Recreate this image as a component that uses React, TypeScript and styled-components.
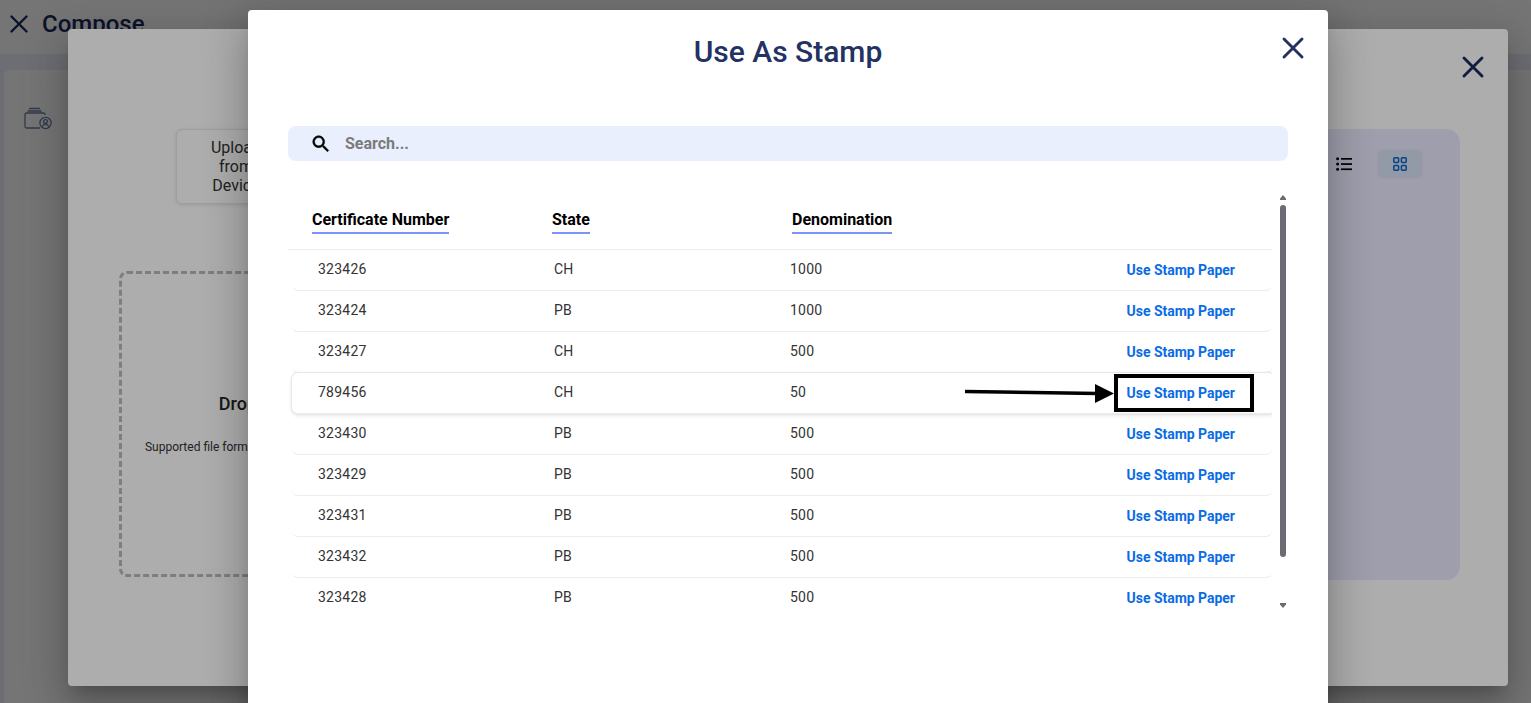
import React from 'react';
import styled, { createGlobalStyle } from 'styled-components';

const GlobalStyle = createGlobalStyle`
  html, body {
    margin: 0;
    height: 100%;
    overflow: hidden;
    background: #fff;
    font-family: Roboto, "Liberation Sans", sans-serif;
  }
  * { box-sizing: border-box; }
`;

/* page behind the dialogs */
const Page = styled.div`
  width: 1531px;
  height: 703px;
  position: relative;
  overflow: hidden;
  background: #eef1fb;
`;

const ComposeBar = styled.header`
  height: 54px;
  background: #fff;
  display: flex;
  align-items: center;
  gap: 13px;
  padding: 0 9px 6px;
  color: #1b2a5e;
  font-size: 24px;
  font-weight: 500;
`;

const ComposeCard = styled.div`
  margin: 16px 0 0 4px;
  height: 640px;
  background: #fff;
  border-radius: 6px 0 0 0;
  padding: 37px 0 0 20px;
  color: #6b7fa3;
`;

const Scrim = styled.div`
  position: absolute;
  inset: 0;
  background: rgba(0, 0, 0, 0.32);
`;

const dialogShadow = `
  0 11px 15px -7px rgba(0, 0, 0, 0.2),
  0 24px 38px 3px rgba(0, 0, 0, 0.14),
  0 9px 46px 8px rgba(0, 0, 0, 0.12)
`;

/* upload dialog */
const UploadDialog = styled.section`
  position: absolute;
  left: 68px;
  top: 29px;
  width: 1440px;
  height: 657px;
  background: #fff;
  border-radius: 4px;
  box-shadow: ${dialogShadow};
  padding: 100px 48px 0 51px;
  display: flex;
  gap: 9px;
`;

const CloseButton = styled.button<{ $top: number; $right: number; $tone: string }>`
  position: absolute;
  top: ${p => p.$top}px;
  right: ${p => p.$right}px;
  width: 24px;
  height: 24px;
  padding: 0;
  border: 0;
  background: none;
  color: ${p => p.$tone};
  display: flex;
`;

const UploadColumn = styled.div`
  width: 362px;
  flex: none;
`;

const DeviceButton = styled.button`
  display: block;
  margin-left: 57px;
  width: 120px;
  height: 75px;
  border: 1px solid #e6e8f5;
  border-radius: 6px;
  background: #fff;
  box-shadow: 0 1px 4px rgba(0, 0, 0, 0.12);
  color: #333;
  font: 400 16px/19px Roboto, sans-serif;
  padding: 0 30px;
`;

const DropZone = styled.div`
  margin-top: 67px;
  height: 306px;
  border: 3px dashed #bababa;
  border-radius: 8px;
  display: flex;
  flex-direction: column;
  align-items: center;
  padding: 118px 6px 0 0;
`;

const DropTitle = styled.div`
  font-size: 18px;
  font-weight: 500;
  line-height: 24px;
  color: #222;
`;

const DropHint = styled.div`
  margin-top: 23px;
  font-size: 12px;
  line-height: 16px;
  color: #333;
  white-space: nowrap;
`;

const LibraryPanel = styled.div`
  flex: 1;
  height: 451px;
  background: #ebe9ff;
  border-radius: 14px;
  padding: 22px 39px 0 0;
  display: flex;
  justify-content: flex-end;
  align-items: flex-start;
  gap: 14px;
`;

const ViewToggle = styled.button<{ $active?: boolean }>`
  width: 42px;
  height: 26px;
  padding: 0;
  border: 0;
  border-radius: 3px;
  display: flex;
  align-items: center;
  justify-content: center;
  background: ${p => (p.$active ? '#d7e4f7' : 'transparent')};
  color: ${p => (p.$active ? '#0b62c4' : '#000')};
  box-shadow: ${p => (p.$active ? '0 0 3px rgba(0,0,0,.12)' : 'none')};
`;

/* stamp dialog */
const StampDialog = styled.section`
  position: absolute;
  left: 248px;
  top: 10px;
  width: 1080px;
  height: 720px;
  background: #fff;
  border-radius: 4px 4px 0 0;
  box-shadow: ${dialogShadow};
  padding: 0 40px;
`;

const Title = styled.h2`
  margin: 0;
  padding-top: 22px;
  height: 116px;
  text-align: center;
  font-size: 30px;
  line-height: 40px;
  font-weight: 500;
  color: #233163;
`;

const SearchBar = styled.div`
  height: 35px;
  background: #e9effd;
  border-radius: 8px;
  display: flex;
  align-items: center;
  padding-left: 22px;
  gap: 13px;
  color: #000;
`;

const SearchText = styled.span`
  font-size: 16px;
  font-weight: 700;
  color: #7b7b7b;
`;

const TableArea = styled.div`
  margin-top: 33px;
  height: 416px;
  display: flex;
  gap: 8px;
`;

const Table = styled.div`
  width: 984px;
  height: 100%;
  overflow: hidden;
`;

const HeadRow = styled.div`
  height: 56px;
  border-bottom: 1px solid #ececec;
  padding: 14px 0 0 24px;
  display: grid;
  grid-template-columns: 240px 240px 1fr;
  align-items: start;
`;

const HeadCell = styled.span`
  justify-self: start;
  font-size: 16px;
  line-height: 24px;
  font-weight: 700;
  color: #000;
  border-bottom: 2px solid #7a94f5;
`;

const Row = styled.div<{ $raised?: boolean }>`
  position: relative;
  margin-left: 4px;
  width: ${p => (p.$raised ? '983px' : '980px')};
  height: 41px;
  padding-bottom: 2px;
  display: grid;
  grid-template-columns: 262px 236px 336.6px 1fr;
  align-items: center;
  border-radius: 6px;
  color: #333;
  font-size: 14px;
  letter-spacing: 0.25px;
  border-bottom: 1px solid #ececec;
  ${p =>
    p.$raised &&
    `
    box-shadow: 0 0 0 1px #e8e8e8, 0 1px 4px rgba(0, 0, 0, 0.14);
    z-index: 1;
  `}
`;

const FirstCell = styled.span`
  padding-left: 26px;
`;

const UseLink = styled.a`
  font-size: 14px;
  font-weight: 700;
  letter-spacing: -0.03px;
  color: #0a6ce4;
  padding-top: 2px;
`;

/* black box and arrow someone drew on the screenshot */
const CalloutBox = styled.div`
  position: absolute;
  left: 822px;
  top: 1px;
  width: 140px;
  height: 38px;
  border: 4px solid #000;
`;

const CalloutArrow = styled.svg`
  position: absolute;
  left: 672px;
  top: 10px;
`;

const ScrollRail = styled.div`
  width: 8px;
  height: 100%;
  position: relative;
`;

const ScrollThumb = styled.div`
  position: absolute;
  left: 0;
  top: 11px;
  width: 6px;
  height: 352px;
  border-radius: 3px;
  background: #6b6b73;
`;

const ScrollArrow = styled.div<{ $down?: boolean }>`
  position: absolute;
  left: 0;
  top: ${p => (p.$down ? '409px' : '1px')};
  width: 6px;
  height: 5px;
  background: #6b6b73;
  clip-path: ${p =>
    p.$down
      ? 'polygon(0 0, 100% 0, 100% 30%, 50% 100%, 0 30%)'
      : 'polygon(50% 0, 100% 70%, 100% 100%, 0 100%, 0 70%)'};
`;

const CrossIcon = ({ size = 24 }: { size?: number }) => (
  <svg width={size} height={size} viewBox="0 0 24 24" fill="none" stroke="currentColor" strokeWidth="2.9" strokeLinecap="round">
    <path d="M3 3 21 21M21 3 3 21" />
  </svg>
);

const WalletIcon = () => (
  <svg width="28" height="24" viewBox="0 0 28 24" fill="none" stroke="currentColor" strokeWidth="1.3">
    <path d="M5 1.5h11M3.5 4h14" />
    <path d="M21 8V7.5a1.5 1.5 0 0 0-1.5-1.5H2.5A1.5 1.5 0 0 0 1 7.5v12A1.5 1.5 0 0 0 2.5 21H16" />
    <circle cx="21.5" cy="16" r="5.6" />
    <circle cx="21.5" cy="14.6" r="1.9" />
    <path d="M18 19.6c.8-1.6 2-2.2 3.5-2.2s2.7.6 3.5 2.2" />
  </svg>
);

const ListIcon = () => (
  <svg width="16" height="14" viewBox="0 0 16 14" fill="currentColor">
    <circle cx="1.6" cy="1.8" r="1.5" />
    <circle cx="1.6" cy="7" r="1.5" />
    <circle cx="1.6" cy="12.2" r="1.5" />
    <rect x="5" y="1" width="11" height="1.7" />
    <rect x="5" y="6.2" width="11" height="1.7" />
    <rect x="5" y="11.4" width="11" height="1.7" />
  </svg>
);

const GridIcon = () => (
  <svg width="14" height="14" viewBox="0 0 14 14" fill="none" stroke="currentColor" strokeWidth="1.5">
    <rect x="0.8" y="0.8" width="4.8" height="4.8" rx="1" />
    <rect x="8.4" y="0.8" width="4.8" height="4.8" rx="1" />
    <rect x="0.8" y="8.4" width="4.8" height="4.8" rx="1" />
    <rect x="8.4" y="8.4" width="4.8" height="4.8" rx="1" />
  </svg>
);

const SearchIcon = () => (
  <svg width="22" height="22" viewBox="0 0 24 24" fill="currentColor" stroke="currentColor" strokeWidth="0.5">
    <path d="M15.5 14h-.79l-.28-.27C15.41 12.59 16 11.11 16 9.5 16 5.91 13.09 3 9.5 3S3 5.91 3 9.5 5.91 16 9.5 16c1.61 0 3.09-.59 4.23-1.57l.27.28v.79l5 4.99L20.49 19l-4.99-5zm-6 0C7.01 14 5 11.99 5 9.5S7.01 5 9.5 5 14 7.01 14 9.5 11.99 14 9.5 14z" />
  </svg>
);

const stamps = [
  { number: '323426', state: 'CH', value: '1000' },
  { number: '323424', state: 'PB', value: '1000' },
  { number: '323427', state: 'CH', value: '500' },
  { number: '789456', state: 'CH', value: '50', picked: true },
  { number: '323430', state: 'PB', value: '500' },
  { number: '323429', state: 'PB', value: '500' },
  { number: '323431', state: 'PB', value: '500' },
  { number: '323432', state: 'PB', value: '500' },
  { number: '323428', state: 'PB', value: '500' },
];

export default function App() {
  return (
    <Page>
      <GlobalStyle />
      <ComposeBar>
        <CrossIcon size={20} />
        Compose
      </ComposeBar>
      <ComposeCard>
        <WalletIcon />
      </ComposeCard>
      <Scrim />

      <UploadDialog>
        <CloseButton $top={26} $right={23} $tone="#1b2a5e">
          <CrossIcon />
        </CloseButton>
        <UploadColumn>
          <DeviceButton>Upload from Device</DeviceButton>
          <DropZone>
            <DropTitle>Drop your files here</DropTitle>
            <DropHint>Supported file formats: PDF, DOC, DOCX, JPG, JPEG, PNG</DropHint>
          </DropZone>
        </UploadColumn>
        <LibraryPanel>
          <ViewToggle>
            <ListIcon />
          </ViewToggle>
          <ViewToggle $active>
            <GridIcon />
          </ViewToggle>
        </LibraryPanel>
      </UploadDialog>
      <Scrim />

      <StampDialog>
        <CloseButton $top={26} $right={23} $tone="#233163">
          <CrossIcon />
        </CloseButton>
        <Title>Use As Stamp</Title>
        <SearchBar>
          <SearchIcon />
          <SearchText>Search...</SearchText>
        </SearchBar>
        <TableArea>
          <Table>
            <HeadRow>
              <HeadCell>Certificate Number</HeadCell>
              <HeadCell>State</HeadCell>
              <HeadCell>Denomination</HeadCell>
            </HeadRow>
            {stamps.map(s => (
              <Row key={s.number} $raised={s.picked}>
                <FirstCell>{s.number}</FirstCell>
                <span>{s.state}</span>
                <span>{s.value}</span>
                <UseLink>Use Stamp Paper</UseLink>
                {s.picked && (
                  <>
                    <CalloutArrow width="152" height="22" viewBox="0 0 152 22">
                      <path d="M1 8.5 L134 10.5" stroke="#000" strokeWidth="3.5" fill="none" />
                      <polygon points="131,1 150,10.5 131,20" fill="#000" />
                    </CalloutArrow>
                    <CalloutBox />
                  </>
                )}
              </Row>
            ))}
          </Table>
          <ScrollRail>
            <ScrollArrow />
            <ScrollThumb />
            <ScrollArrow $down />
          </ScrollRail>
        </TableArea>
      </StampDialog>
    </Page>
  );
}
